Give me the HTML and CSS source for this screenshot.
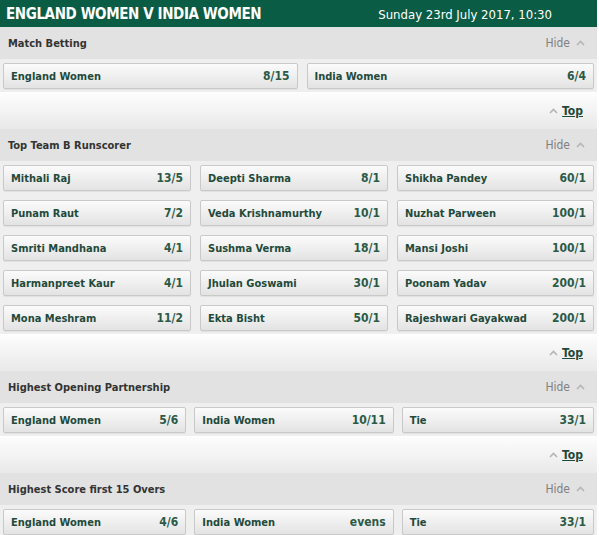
FILE: index.html
```html
<!DOCTYPE html>
<html lang="en">
<head>
    <meta charset="UTF-8">
    <meta name="viewport" content="width=device-width, initial-scale=1.0">
    <title>England Women v India Women</title>
    <link rel="stylesheet" href="styles.css">
</head>
<body>
    <div class="page">
        <header class="event-head">
            <h1>ENGLAND WOMEN V INDIA WOMEN</h1>
            <span class="event-date">Sunday 23rd July 2017, 10:30</span>
        </header>

        <!-- Match Betting -->
        <section class="market">
            <div class="market-head">
                <h2>Match Betting</h2>
                <a class="hide-link" href="#">Hide <svg width="9" height="6" viewBox="0 0 9 6"><polyline points="1,5 4.5,1.5 8,5" fill="none" stroke="#b5b5b5" stroke-width="1.6"/></svg></a>
            </div>
            <div class="market-body grid-two">
                <button class="bet"><span>England Women</span><span class="odds">8/15</span></button>
                <button class="bet"><span>India Women</span><span class="odds">6/4</span></button>
            </div>
            <div class="top-bar">
                <a class="top-link" href="#"><svg width="9" height="6" viewBox="0 0 9 6"><polyline points="1,5 4.5,1.5 8,5" fill="none" stroke="#b5b5b5" stroke-width="1.6"/></svg> <u>Top</u></a>
            </div>
        </section>

        <!-- Top Team B Runscorer -->
        <section class="market">
            <div class="market-head">
                <h2>Top Team B Runscorer</h2>
                <a class="hide-link" href="#">Hide <svg width="9" height="6" viewBox="0 0 9 6"><polyline points="1,5 4.5,1.5 8,5" fill="none" stroke="#b5b5b5" stroke-width="1.6"/></svg></a>
            </div>
            <div class="market-body grid-three">
                <button class="bet"><span>Mithali Raj</span><span class="odds">13/5</span></button>
                <button class="bet"><span>Deepti Sharma</span><span class="odds">8/1</span></button>
                <button class="bet"><span>Shikha Pandey</span><span class="odds">60/1</span></button>
                <button class="bet"><span>Punam Raut</span><span class="odds">7/2</span></button>
                <button class="bet"><span>Veda Krishnamurthy</span><span class="odds">10/1</span></button>
                <button class="bet"><span>Nuzhat Parween</span><span class="odds">100/1</span></button>
                <button class="bet"><span>Smriti Mandhana</span><span class="odds">4/1</span></button>
                <button class="bet"><span>Sushma Verma</span><span class="odds">18/1</span></button>
                <button class="bet"><span>Mansi Joshi</span><span class="odds">100/1</span></button>
                <button class="bet"><span>Harmanpreet Kaur</span><span class="odds">4/1</span></button>
                <button class="bet"><span>Jhulan Goswami</span><span class="odds">30/1</span></button>
                <button class="bet"><span>Poonam Yadav</span><span class="odds">200/1</span></button>
                <button class="bet"><span>Mona Meshram</span><span class="odds">11/2</span></button>
                <button class="bet"><span>Ekta Bisht</span><span class="odds">50/1</span></button>
                <button class="bet"><span>Rajeshwari Gayakwad</span><span class="odds">200/1</span></button>
            </div>
            <div class="top-bar">
                <a class="top-link" href="#"><svg width="9" height="6" viewBox="0 0 9 6"><polyline points="1,5 4.5,1.5 8,5" fill="none" stroke="#b5b5b5" stroke-width="1.6"/></svg> <u>Top</u></a>
            </div>
        </section>

        <!-- Highest Opening Partnership -->
        <section class="market">
            <div class="market-head">
                <h2>Highest Opening Partnership</h2>
                <a class="hide-link" href="#">Hide <svg width="9" height="6" viewBox="0 0 9 6"><polyline points="1,5 4.5,1.5 8,5" fill="none" stroke="#b5b5b5" stroke-width="1.6"/></svg></a>
            </div>
            <div class="market-body grid-tie">
                <button class="bet"><span>England Women</span><span class="odds">5/6</span></button>
                <button class="bet"><span>India Women</span><span class="odds">10/11</span></button>
                <button class="bet"><span>Tie</span><span class="odds">33/1</span></button>
            </div>
            <div class="top-bar">
                <a class="top-link" href="#"><svg width="9" height="6" viewBox="0 0 9 6"><polyline points="1,5 4.5,1.5 8,5" fill="none" stroke="#b5b5b5" stroke-width="1.6"/></svg> <u>Top</u></a>
            </div>
        </section>

        <!-- Highest Score first 15 Overs -->
        <section class="market">
            <div class="market-head">
                <h2>Highest Score first 15 Overs</h2>
                <a class="hide-link" href="#">Hide <svg width="9" height="6" viewBox="0 0 9 6"><polyline points="1,5 4.5,1.5 8,5" fill="none" stroke="#b5b5b5" stroke-width="1.6"/></svg></a>
            </div>
            <div class="market-body grid-tie">
                <button class="bet"><span>England Women</span><span class="odds">4/6</span></button>
                <button class="bet"><span>India Women</span><span class="odds">evens</span></button>
                <button class="bet"><span>Tie</span><span class="odds">33/1</span></button>
            </div>
        </section>
    </div>
</body>
</html>
```

FILE: styles.css
```css
/* Global styles */
body {
    font-family: 'DejaVu Sans Condensed', 'DejaVu Sans', sans-serif;
    margin: 0;
    padding: 0;
    background-color: #fff;
    color: #333;
}

.page {
    width: 597px;
}

/* Event header */
.event-head {
    background-color: #0b5c45;
    color: #fff;
    height: 27px;
    padding: 0 45px 0 6px;
    display: flex;
    justify-content: space-between;
    align-items: center;
}

.event-head h1 {
    margin: 0;
    font-size: 15px;
    font-weight: bold;
    letter-spacing: -0.4px;
}

.event-date {
    font-size: 13px;
    padding-top: 2px;
}

/* Market */
.market-head {
    background-color: #e2e2e2;
    height: 32px;
    padding: 0 12px 0 8px;
    display: flex;
    justify-content: space-between;
    align-items: center;
}

.market-head h2 {
    margin: 0;
    font-size: 11px;
    font-weight: bold;
    color: #333;
}

.hide-link {
    font-size: 12px;
    color: #808080;
    text-decoration: none;
    display: flex;
    align-items: center;
    gap: 6px;
}

.market-body {
    background-color: #efefef;
    border-bottom: 1px solid #fff;
    padding: 4px 3px 3px;
    display: grid;
    gap: 9px;
}

.grid-two {
    grid-template-columns: 294fr 287fr;
}

.grid-three {
    grid-template-columns: 188fr 188fr 197fr;
}

.grid-tie {
    grid-template-columns: 183fr 199fr 192fr;
    column-gap: 8px;
}

.bet {
    height: 26px;
    padding: 0 7px;
    border: 1px solid #c9c9c9;
    border-radius: 2px;
    background: linear-gradient(#fbfbfb, #e3e3e3);
    box-shadow: 0 1px 1px rgba(0, 0, 0, 0.06);
    display: flex;
    justify-content: space-between;
    align-items: center;
    font-family: inherit;
    font-size: 11px;
    font-weight: bold;
    color: #1f4a3b;
    cursor: pointer;
}

.odds {
    font-size: 12px;
    color: #2b5a47;
}

/* Back to top */
.top-bar {
    height: 36px;
    background: linear-gradient(#fdfdfd, #e9e9e9);
    display: flex;
    justify-content: flex-end;
    align-items: center;
    padding: 0 14px;
}

.top-link {
    font-size: 12px;
    font-weight: bold;
    color: #1f4a3b;
    text-decoration: none;
    display: flex;
    align-items: center;
    gap: 4px;
}
```
